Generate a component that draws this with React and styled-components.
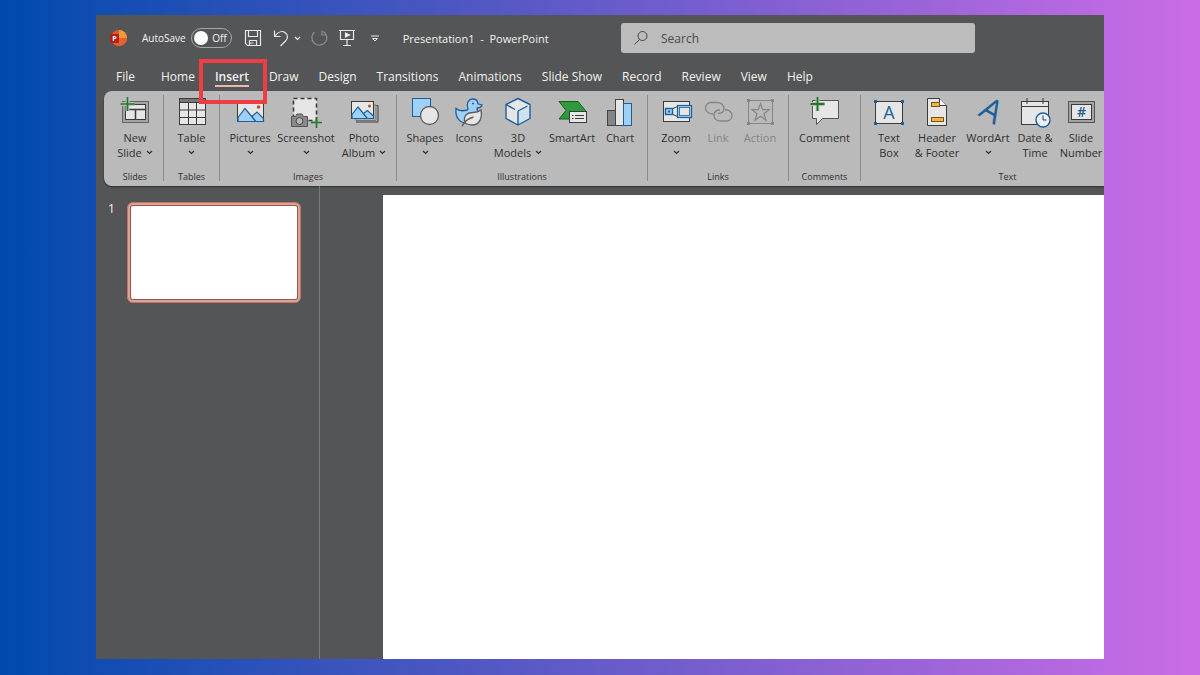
import React from 'react';
import { useState } from 'react';
import styled, { createGlobalStyle, css } from 'styled-components';

const INK = '#3b3b3b';
const BLUE = '#1f5f99';
const SKY = '#9fd0f5';
const PAPER = '#e6e6e6';
const GREEN = '#1c7a24';

const tabs = [
  'File',
  'Home',
  'Insert',
  'Draw',
  'Design',
  'Transitions',
  'Animations',
  'Slide Show',
  'Record',
  'Review',
  'View',
  'Help',
];

const NewSlideIcon = () => (
  <Glyph>
    <rect x="3.5" y="4.5" width="26" height="21" fill="#a3a3a3" stroke="#666" />
    <rect x="6.5" y="7.5" width="20" height="15" fill={PAPER} stroke={INK} />
    <path d="M6.5 12.5h20M16.5 12.5v10" stroke={INK} strokeWidth="1.5" />
    <path d="M8.5 0v14M1.5 7h14" stroke="#bcbcbc" strokeWidth="4" />
    <path d="M8.5 0v14M1.5 7h14" stroke={GREEN} strokeWidth="1.6" />
  </Glyph>
);

const TableIcon = () => (
  <Glyph>
    <rect x="3.5" y="1.5" width="26" height="26" fill={PAPER} stroke={INK} />
    <rect x="3.5" y="1.5" width="26" height="4" fill="#777" stroke={INK} />
    <path d="M12.5 5.5v22M20.5 5.5v22M3.5 13h26M3.5 20.5h26" stroke={INK} />
  </Glyph>
);

const PicturesIcon = () => (
  <Glyph>
    <rect x="3.5" y="4.5" width="26" height="20" fill={PAPER} stroke={INK} />
    <path d="M4 20.5 11 11.5l11 13H4z" fill={SKY} stroke={BLUE} strokeWidth="1.2" />
    <path d="m18 19.5 5-4.5 6.5 6.5v3H22z" fill={SKY} stroke={BLUE} strokeWidth="1.2" />
    <circle cx="24.5" cy="10" r="1.8" fill="#b5541f" />
  </Glyph>
);

const ScreenshotIcon = () => (
  <Glyph>
    <rect x="3.5" y="1.5" width="23" height="22" fill={PAPER} />
    <rect x="3.5" y="1.5" width="23" height="22" stroke={INK} strokeWidth="1.6" strokeDasharray="4 3" />
    <path d="M1.5 19.5h4l1.5-2.5h5l1.5 2.5h4v10h-16z" fill="#8a8a8a" stroke="#555" />
    <circle cx="9.5" cy="24" r="3.5" fill="#b5b5b5" stroke="#4a4a4a" />
    <path d="M26.5 20v11M21 25.5h11" stroke={GREEN} strokeWidth="1.6" />
  </Glyph>
);

const AlbumIcon = () => (
  <Glyph>
    <path d="M28.5 8.5h1.5v16.500H8" stroke={INK} />
    <path d="M26 8h2v15.500H8V22" fill="#b0b0b0" stroke="#777" />
    <rect x="3.5" y="4.5" width="22" height="17" fill={PAPER} stroke={INK} />
    <path d="M4 17.5 10 10l9.5 11.5H4z" fill={SKY} stroke={BLUE} strokeWidth="1.2" />
    <path d="m15.5 16.5 4-3 6 5.5v2.5h-6z" fill={SKY} stroke={BLUE} strokeWidth="1.2" />
    <circle cx="21.5" cy="9" r="1.5" fill="#b5541f" />
  </Glyph>
);

const ShapesIcon = () => (
  <Glyph>
    <rect x="3.5" y="1.5" width="18" height="18" fill={SKY} stroke={BLUE} />
    <circle cx="20.5" cy="18.5" r="9" fill={PAPER} stroke="#5c5c5c" strokeWidth="1.3" />
  </Glyph>
);

const DuckIcon = () => (
  <Glyph>
    <path
      d="M3 11.5c2.500 2.500 6.500 2.800 11.500 1.500 1-1.500 0-3-.3-5 0-3.500 2.500-6 5.500-6 3.300 0 5 2.200 5.200 4.800L29 8c-.5 2-2 3-4.800 3-.7 2.500 1.300 4 1.300 7.500 0 5.500-4 8-9.500 8C7 26.500 2 21 3 11.500z"
      fill={SKY}
      stroke={BLUE}
      strokeWidth="1.3"
    />
    <circle cx="20" cy="6.5" r="1" fill={BLUE} />
    <path
      d="M12 26c-2.5-8 3-10.500 8-10.500 3.500 0 6-.8 8-2.500 1.500 7-1 15-9 15-3 0-5-1-7-2z"
      fill={PAPER}
      stroke="#5c5c5c"
      strokeWidth="1.3"
    />
    <path d="M9 29.5c2-4.500 6-8 11.5-9.500" stroke="#5c5c5c" strokeWidth="1.3" />
  </Glyph>
);

const CubeIcon = () => (
  <Glyph>
    <path d="M16 1.5 28 7.5v14l-12 6.5-12-6.5v-14z" fill={PAPER} />
    <path d="M16 14v14l12-6.5v-14z" fill="#cfe2f1" />
    <path
      d="M16 1.5 28 7.5v14l-12 6.5-12-6.5v-14zM16 14v14M16 14l9.500-5M4 7.500l9 5"
      stroke={BLUE}
      strokeWidth="1.4"
      strokeLinejoin="round"
    />
  </Glyph>
);

const SmartArtIcon = () => (
  <Glyph>
    <path d="M3 4.5h19l7.5 9-5.500 8.500H3l7-8.500z" fill="#2f9a3b" stroke="#1b5c23" />
    <rect x="13.5" y="14.5" width="17" height="11" fill={PAPER} stroke={INK} />
    <path d="M16 18.5h1.5M16 21.5h1.5M19 18.5h9M19 21.5h9" stroke={INK} />
  </Glyph>
);

const ChartIcon = () => (
  <Glyph>
    <rect x="3.5" y="13.5" width="8" height="15" fill="#858585" stroke="#444" />
    <rect x="11.5" y="2.5" width="8" height="26" fill={PAPER} stroke="#444" />
    <rect x="19.5" y="6.5" width="8" height="22" fill={SKY} stroke={BLUE} />
  </Glyph>
);

const ZoomIcon = () => (
  <Glyph>
    <rect x="3.5" y="4.5" width="26" height="20" fill={PAPER} stroke={INK} />
    <path d="M13 11.5 18.5 9v11L13 17.5" fill={PAPER} stroke={INK} />
    <rect x="5.5" y="11.5" width="7" height="6" fill={SKY} stroke={BLUE} strokeWidth="1.4" />
    <rect x="8" y="13.5" width="2" height="2" fill={BLUE} />
    <rect x="17.5" y="8.5" width="14" height="12" fill={SKY} stroke={BLUE} strokeWidth="1.2" />
    <rect x="19.5" y="10.5" width="10" height="8" fill={PAPER} stroke={BLUE} strokeWidth="0.8" />
  </Glyph>
);

const LinkIcon = () => (
  <Glyph>
    <path
      d="M11 17c-4.500 0-7.500-2.500-7.500-6 0-3.300 2.500-5.500 5.500-5.500h6.500c3.500 0 6.500 2.500 6.500 5.700 0 3.300-2.500 5.300-6 5.300"
      stroke="#858585"
      strokeWidth="1.3"
    />
    <path
      d="M23 12.500c4 0 7 2.500 7 6 0 3.300-2.500 5.500-5.500 5.500H18c-3.500 0-6-2.500-6-5.700 0-3.300 2.500-5.300 6-5.300"
      stroke="#858585"
      strokeWidth="1.3"
    />
  </Glyph>
);

const ActionIcon = () => (
  <Glyph>
    <rect x="4.5" y="3.5" width="24" height="23" stroke="#858585" />
    <path d="M3 2h3v3H3zM27 2h3v3h-3zM3 25h3v3H3zM27 25h3v3h-3z" fill="#858585" />
    <path
      d="m16.5 6.5 2.2 6.2h6.3l-5 4 1.9 6.5-5.4-3.9-5.400 3.9 1.9-6.500-5-4h6.300z"
      stroke="#858585"
      strokeWidth="1.2"
    />
  </Glyph>
);

const CommentIcon = () => (
  <Glyph>
    <path d="M3.5 3.5h26v18H13.5l-6 6v-6h-4z" fill={PAPER} stroke="#555" />
    <path d="M8.5 0v14M1.5 7h14" stroke="#bcbcbc" strokeWidth="4" />
    <path d="M8.5 0v14M1.5 7h14" stroke={GREEN} strokeWidth="1.8" />
  </Glyph>
);

const TextBoxIcon = () => (
  <Glyph>
    <rect x="2.5" y="4.5" width="27" height="22" fill={PAPER} stroke={INK} />
    <path d="M1 3h3v3H1zM28 3h3v3h-3zM1 25h3v3H1zM28 25h3v3h-3z" fill={BLUE} />
    <GlyphText x="16" y="22" fontSize="18">A</GlyphText>
  </Glyph>
);

const HeaderIcon = () => (
  <Glyph>
    <path d="M6.5 1.5h12l7 7v20h-19z" fill={PAPER} stroke={INK} />
    <path d="M18.5 1.5v7h7" fill="#fff" stroke={INK} />
    <rect x="10.5" y="5.5" width="8" height="4" fill="#efb548" stroke="#7a5514" />
    <rect x="10.5" y="20.5" width="12" height="4" fill="#efb548" stroke="#7a5514" />
  </Glyph>
);

const WordArtIcon = () => (
  <Glyph>
    <GlyphText x="14" y="23" fontSize="32" fontWeight="500" transform="rotate(30 14 23)">A</GlyphText>
  </Glyph>
);

const DateIcon = () => (
  <Glyph>
    <rect x="2.5" y="4.5" width="27" height="23" fill={PAPER} stroke={INK} />
    <path d="M2.5 9.5h27M8 1v6M24 1v6" stroke={INK} />
    <circle cx="24" cy="23" r="7" fill="#e8f1f9" stroke={BLUE} strokeWidth="1.4" />
    <path d="M24 18.5V23h3.5" stroke={INK} />
  </Glyph>
);

const NumberIcon = () => (
  <Glyph>
    <rect x="3.5" y="4.5" width="26" height="21" fill="#a3a3a3" stroke="#555" />
    <rect x="6.5" y="7.5" width="20" height="15" fill={PAPER} stroke={INK} />
    <GlyphText x="16.5" y="20" fontSize="14" fontWeight="600">#</GlyphText>
  </Glyph>
);

const Chevron = () => (
  <Caret viewBox="0 0 7 5" aria-hidden="true">
    <path d="m1 1 2.5 2.5L6 1" />
  </Caret>
);

const groups = [
  {
    name: 'Slides',
    items: [{ lines: ['New', 'Slide'], width: 48, icon: NewSlideIcon, menu: true }],
  },
  {
    name: 'Tables',
    items: [{ lines: ['Table', ''], width: 47, icon: TableIcon, menu: true }],
  },
  {
    name: 'Images',
    items: [
      { lines: ['Pictures', ''], width: 52, icon: PicturesIcon, menu: true },
      { lines: ['Screenshot', ''], width: 60, icon: ScreenshotIcon, menu: true },
      { lines: ['Photo', 'Album'], width: 56, icon: AlbumIcon, menu: true },
    ],
  },
  {
    name: 'Illustrations',
    items: [
      { lines: ['Shapes', ''], width: 48, icon: ShapesIcon, menu: true },
      { lines: ['Icons'], width: 40, icon: DuckIcon },
      { lines: ['3D', 'Models'], width: 58, icon: CubeIcon, menu: true },
      { lines: ['SmartArt'], width: 50, icon: SmartArtIcon },
      { lines: ['Chart'], width: 46, icon: ChartIcon },
    ],
  },
  {
    name: 'Links',
    items: [
      { lines: ['Zoom', ''], width: 48, icon: ZoomIcon, menu: true },
      { lines: ['Link'], width: 36, icon: LinkIcon, disabled: true },
      { lines: ['Action'], width: 48, icon: ActionIcon, disabled: true },
    ],
  },
  {
    name: 'Comments',
    items: [{ lines: ['Comment'], width: 63, icon: CommentIcon }],
  },
  {
    name: 'Text',
    minWidth: 294,
    items: [
      { lines: ['Text', 'Box'], width: 48, icon: TextBoxIcon },
      { lines: ['Header', '& Footer'], width: 48, icon: HeaderIcon },
      { lines: ['WordArt', ''], width: 54, icon: WordArtIcon, menu: true },
      { lines: ['Date &', 'Time'], width: 40, icon: DateIcon },
      { lines: ['Slide', 'Number'], width: 52, icon: NumberIcon },
    ],
  },
];

const RibbonItem = ({ lines, width, icon: Icon, menu, disabled }) => (
  <Tool type="button" $width={width} disabled={disabled}>
    <Icon />
    {lines.map((line, i) => (
      <Line key={i}>
        {line}
        {menu && i === lines.length - 1 && <Chevron />}
      </Line>
    ))}
  </Tool>
);

const App = () => {
  const [active, setActive] = useState('Insert');
  const [autoSave, setAutoSave] = useState(false);

  return (
    <Page>
      <GlobalStyle />
      <Window>
        <TitleBar>
          <QuickAccess>
            <Logo viewBox="0 0 18 18" aria-hidden="true">
              <circle cx="9" cy="9" r="8" fill="#e2572b" />
              <path d="M9 1a8 8 0 0 1 8 8H9z" fill="#f59a3c" />
              <path d="M17 9a8 8 0 0 1-14 5.300L9 9z" fill="#e8602e" />
              <rect x="0" y="5" width="9" height="9" rx="1" fill="#b3201b" />
              <text x="4.500" y="12" fontSize="7" fontWeight="700" textAnchor="middle" fill="#fff">
                P
              </text>
            </Logo>
            <AutoSave>
              AutoSave
              <input
                type="checkbox"
                checked={autoSave}
                onChange={() => setAutoSave(!autoSave)}
              />
              <Switch $on={autoSave}>
                <Knob />
                {autoSave ? 'On' : 'Off'}
              </Switch>
            </AutoSave>
            <QuickButton type="button" aria-label="Save" $gap={12}>
              <BarIcon viewBox="0 0 18 18">
                <path d="M1.5 1.5h15v15h-13l-2-2zM4.5 1.5v6h9v-6M5.5 16.5v-5h7v5M5.5 14h4" />
              </BarIcon>
            </QuickButton>
            <QuickButton type="button" aria-label="Undo" $gap={10}>
              <BarIcon viewBox="0 0 18 18">
                <path d="M2.5 1.5v6h6M3 7C6 3 10 1.5 13 3.5c3.500 2.500 3 6 .5 8.500L8.500 17" />
              </BarIcon>
            </QuickButton>
            <QuickButton type="button" aria-label="Undo list" $gap={4}>
              <Chevron />
            </QuickButton>
            <QuickButton type="button" aria-label="Redo" $gap={9} disabled>
              <BarIcon viewBox="0 0 18 18">
                <path d="M12 1.5v4.500h4.500M4.500 3a7.500 7.500 0 1 0 9-.5" />
              </BarIcon>
            </QuickButton>
            <QuickButton type="button" aria-label="Start presentation" $gap={10}>
              <BarIcon viewBox="0 0 18 18">
                <path d="M1 1.5h16M2.5 1.5v9h13v-9M9 10.5v6M5 16.5h8" />
                <path d="m7.5 4 4 2-4 2z" fill="#fff" />
              </BarIcon>
            </QuickButton>
            <QuickButton type="button" aria-label="Customize toolbar" $gap={15}>
              <MoreIcon viewBox="0 0 8 7">
                <path d="M0 1h8M1.5 3.5h5L4 6z" />
              </MoreIcon>
            </QuickButton>
            <Title>Presentation1&nbsp; -&nbsp; PowerPoint</Title>
          </QuickAccess>
          <Search>
            <SearchIcon viewBox="0 0 16 16" aria-hidden="true">
              <circle cx="9.5" cy="6" r="4.5" />
              <path d="M6.5 9.5 1.5 14.5" />
            </SearchIcon>
            <input type="search" placeholder="Search" aria-label="Search" />
          </Search>
        </TitleBar>
        <Tabs>
          {tabs.map(tab => (
            <Tab key={tab} type="button" $active={tab === active} onClick={() => setActive(tab)}>
              {tab}
              {tab === 'Insert' && <Highlight />}
            </Tab>
          ))}
        </Tabs>
        <Ribbon>
          {groups.map(({ name, items, minWidth }) => (
            <Group key={name} $minWidth={minWidth}>
              <Tools>
                {items.map(item => (
                  <RibbonItem key={item.lines[0]} {...item} />
                ))}
              </Tools>
              <GroupName>{name}</GroupName>
            </Group>
          ))}
        </Ribbon>
        <Workspace>
          <Thumbnails>
            <SlideIndex>1</SlideIndex>
            <Thumbnail type="button" aria-label="Slide 1" />
          </Thumbnails>
          <Editor>
            <Slide />
          </Editor>
        </Workspace>
      </Window>
    </Page>
  );
};

const GlobalStyle = createGlobalStyle`
  * {
    box-sizing: border-box;
  }
  body {
    margin: 0;
    font-family: 'Open Sans', 'Noto Sans', sans-serif;
  }
  button, input {
    font: inherit;
    color: inherit;
  }
  button {
    padding: 0;
    border: 0;
    background: none;
  }
`;
const Page = styled.div`
  display: flex;
  min-height: 100vh;
  padding: 15px 8% 16px;
  background: linear-gradient(90deg, #004aad, #cb6ce6);
`;
const Window = styled.main`
  display: flex;
  flex-direction: column;
  flex: 1;
  min-width: 0;
  overflow: hidden;
  background: #535556;
  color: #f2f2f2;
`;
const TitleBar = styled.header`
  display: grid;
  grid-template-columns: 525fr 354fr 129fr;
  align-items: center;
  height: 46px;
`;
const QuickAccess = styled.div`
  display: flex;
  align-items: center;
  padding-left: 14px;
  white-space: nowrap;
`;
const Logo = styled.svg`
  width: 18px;
  height: 18px;
`;
const AutoSave = styled.label`
  display: flex;
  align-items: center;
  gap: 5px;
  margin-left: 14px;
  font-size: 10px;

  input {
    position: absolute;
    opacity: 0;
  }
`;
const Switch = styled.span`
  display: flex;
  flex-direction: ${({ $on }) => ($on ? 'row-reverse' : 'row')};
  align-items: center;
  justify-content: space-between;
  width: 41px;
  height: 20px;
  padding: 0 4px 0 2px;
  border: 1px solid #a5a7a8;
  border-radius: 10px;
`;
const Knob = styled.span`
  width: 14px;
  height: 14px;
  border-radius: 50%;
  background: #fff;
`;
const QuickButton = styled.button`
  display: flex;
  margin-left: ${({ $gap }) => $gap}px;

  &:disabled {
    opacity: 0.4;
  }
`;
const BarIcon = styled.svg`
  width: 18px;
  height: 18px;
  fill: none;
  stroke: #e8e8e8;
  stroke-width: 1.2;
`;
const MoreIcon = styled.svg`
  width: 8px;
  height: 7px;
  fill: none;
  stroke: #e8e8e8;
`;
const Title = styled.span`
  margin-left: 24px;
  font-size: 11px;
`;
const Search = styled.label`
  display: flex;
  align-items: center;
  gap: 12px;
  height: 30px;
  padding: 0 12px;
  border-radius: 3px;
  background: #bcbcbc;
  color: #444;
  font-size: 12px;

  input {
    flex: 1;
    min-width: 0;
    padding: 0;
    border: 0;
    outline: 0;
    background: none;
  }
  input::placeholder {
    color: #4a4a4a;
  }
`;
const SearchIcon = styled.svg`
  width: 16px;
  height: 16px;
  fill: none;
  stroke: #444;
`;
const Tabs = styled.nav`
  display: flex;
  gap: 20px;
  height: 30px;
  padding-left: 20px;
  font-size: 12px;
`;
const Tab = styled.button`
  position: relative;
  height: 30px;
  white-space: nowrap;

  &:first-child {
    margin-right: 6px;
  }
  ${({ $active }) =>
    $active &&
    css`
      font-weight: 600;

      &::after {
        content: '';
        position: absolute;
        right: 0;
        bottom: 4px;
        left: 0;
        height: 2px;
        background: #e8b9a8;
      }
    `}
`;
const Highlight = styled.span`
  position: absolute;
  z-index: 1;
  inset: -2px -18px -13px -16px;
  border: 4px solid #ee3d43;
  pointer-events: none;
`;
const Ribbon = styled.section`
  display: flex;
  height: 95px;
  margin-left: 8px;
  padding: 4px 0 1px 3px;
  border-radius: 8px 0 0 8px;
  background: #bababa;
  box-shadow: 0 1px 2px #2e2f30;
  color: #303030;
`;
const Group = styled.div`
  display: flex;
  flex-direction: column;
  flex: none;
  min-width: ${({ $minWidth }) => ($minWidth ? `${$minWidth}px` : 'auto')};
  padding: 0 5px 0 4px;
  background: linear-gradient(#8c8c8c, #8c8c8c) right top / 1px 86px no-repeat;
`;
const Tools = styled.div`
  display: flex;
  flex: 1;
  align-items: flex-start;
`;
const Tool = styled.button`
  display: flex;
  flex-direction: column;
  align-items: center;
  width: ${({ $width }) => $width}px;
  padding-top: 2px;
  font-size: 11px;
  line-height: 15px;
  white-space: nowrap;

  &:disabled {
    color: #858585;
  }
`;
const Glyph = styled.svg.attrs({ viewBox: '0 0 32 32', 'aria-hidden': true })`
  width: 32px;
  height: 32px;
  margin-bottom: 1px;
  overflow: visible;
  fill: none;
`;
const GlyphText = styled.text`
  fill: ${BLUE};
  text-anchor: middle;
`;
const Line = styled.span`
  display: flex;
  align-items: center;
  justify-content: center;
  gap: 4px;
  min-height: 15px;
`;
const Caret = styled.svg`
  width: 7px;
  height: 5px;
  fill: none;
  stroke: currentColor;
  stroke-width: 1.2;
`;
const GroupName = styled.div`
  font-size: 9px;
  line-height: 16px;
  text-align: center;
`;
const Workspace = styled.div`
  display: flex;
  flex: 1;
`;
const Thumbnails = styled.aside`
  display: flex;
  align-items: flex-start;
  gap: 12px;
  width: 224px;
  padding: 16px 18px 0 12px;
  border-right: 1px solid #77797a;
`;
const SlideIndex = styled.span`
  font-size: 12px;
  line-height: 14px;
`;
const Thumbnail = styled.button`
  flex: 1;
  height: 101px;
  border: 1px solid #c07568;
  border-radius: 6px;
  background: #fff;
  box-shadow: inset 0 0 0 2px #dda298, inset 0 0 0 3px #99584c;
`;
const Editor = styled.div`
  display: flex;
  flex: 1;
  padding: 9px 0 0 63px;
`;
const Slide = styled.div`
  flex: 1;
  background: #fff;
`;

export default App;
